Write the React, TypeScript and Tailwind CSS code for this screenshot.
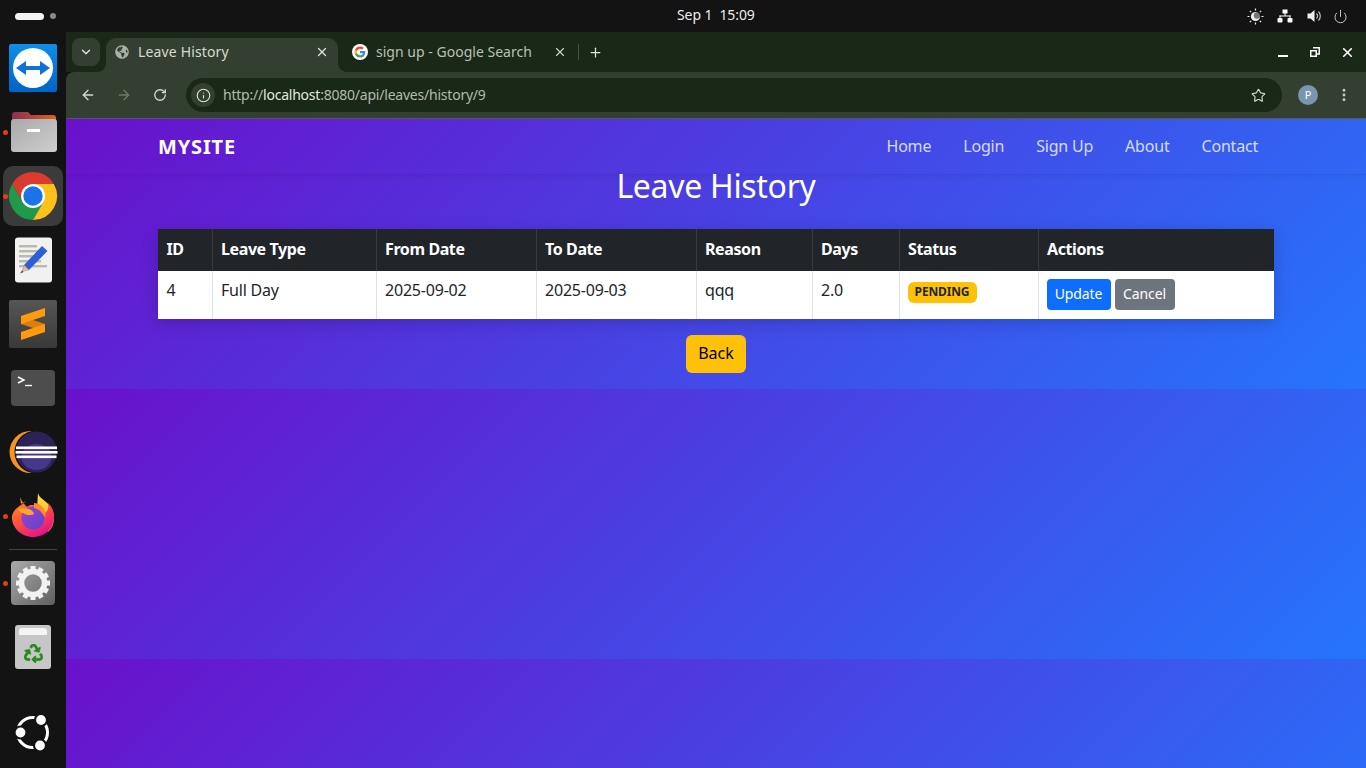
import { ArrowLeft, ArrowRight, RotateCw, Info, Star, X, Plus, ChevronDown, EllipsisVertical, Power } from "lucide-react";
import { FaGlobeAmericas, FaRecycle } from "react-icons/fa";
import type { ReactNode } from "react";

function Dot() {
  return <span className="absolute left-[3px] top-1/2 -mt-[2.5px] h-[5px] w-[5px] rounded-full bg-[#d9450f]" />;
}

function DockRow({ children, dot, className = "" }: { children: ReactNode; dot?: boolean; className?: string }) {
  return (
    <div className={`relative flex h-16 w-[66px] shrink-0 items-center justify-center ${className}`}>
      {children}
      {dot && <Dot />}
    </div>
  );
}

function Ic({ children }: { children: ReactNode }) {
  return (
    <svg width="64" height="64" viewBox="0 0 64 64" className="block">
      {children}
    </svg>
  );
}

const teeth = [0, 30, 60, 90, 120, 150, 180, 210, 240, 270, 300, 330];

function Dock() {
  return (
    <aside className="flex w-[66px] shrink-0 flex-col bg-[#131313] pt-1">
      <DockRow>
        <Ic>
          <defs>
            <linearGradient id="tv" x1="0" y1="0" x2="0" y2="1">
              <stop offset="0" stopColor="#0e8ee9" />
              <stop offset="1" stopColor="#0064c8" />
            </linearGradient>
          </defs>
          <rect x="8" y="8" width="48" height="48" rx="2" fill="url(#tv)" />
          <circle cx="32" cy="32" r="20" fill="#fff" />
          <path d="M15 32 L25 25 V30 H39 V25 L49 32 L39 39 V34 H25 V39 Z" fill="#0e72d8" />
        </Ic>
      </DockRow>
      <DockRow dot>
        <Ic>
          <defs>
            <linearGradient id="fo" x1="0" y1="0" x2="1" y2="0">
              <stop offset="0" stopColor="#8a2f52" />
              <stop offset="1" stopColor="#e2601f" />
            </linearGradient>
            <linearGradient id="ff" x1="0" y1="0" x2="1" y2="1">
              <stop offset="0" stopColor="#a9a9a9" />
              <stop offset="1" stopColor="#cfcfcf" />
            </linearGradient>
          </defs>
          <path d="M11 15 a3 3 0 0 1 3-3 h13 l3 3 h22 a3 3 0 0 1 3 3 v10 h-44z" fill="url(#fo)" />
          <rect x="10" y="19" width="46" height="33" rx="3" fill="url(#ff)" />
          <rect x="26" y="29" width="13" height="3" fill="#fff" />
        </Ic>
      </DockRow>
      <DockRow dot>
        <div className="flex h-[60px] w-[60px] items-center justify-center rounded-[10px] bg-[#3b3b3b]">
          <svg width="60" height="60" viewBox="2 2 60 60" className="block">
            <path d="M52.8 20 A24 24 0 0 0 11.2 20 L21.61 38 L32 32 L32 20 Z" fill="#db3a2f" />
            <path d="M11.2 20 A24 24 0 0 0 32 56 L42.39 38 L32 32 L21.61 38 Z" fill="#1f9a4b" />
            <path d="M32 56 A24 24 0 0 0 52.8 20 L32 20 L32 32 L42.39 38 Z" fill="#fcc21b" />
            <circle cx="32" cy="32" r="12" fill="#fff" />
            <circle cx="32" cy="32" r="9.7" fill="#1a73e8" />
          </svg>
        </div>
      </DockRow>
      <DockRow>
        <Ic>
          <rect x="14" y="9.5" width="37" height="45" rx="3" fill="#f1f1f1" />
          <g fill="#b9b9ad">
            <rect x="18" y="17" width="18" height="2.4" />
            <rect x="18" y="22" width="24" height="2.4" />
            <rect x="18" y="27" width="20" height="2.4" />
            <rect x="18" y="32" width="22" height="2.4" />
            <rect x="18" y="37" width="28" height="2.4" />
          </g>
          <path d="M41 18 L46.5 23 L28 42 L21 43.5 L23 37 Z" fill="#2f5fd8" />
          <path d="M23 37 L28 42 L21 44.5 Z" fill="#e8b98a" />
          <path d="M21 42.5 L22.5 44 L19 45.5 Z" fill="#444" />
        </Ic>
      </DockRow>
      <DockRow>
        <Ic>
          <defs>
            <linearGradient id="sb" x1="0" y1="0" x2="0" y2="1">
              <stop offset="0" stopColor="#565656" />
              <stop offset="1" stopColor="#393939" />
            </linearGradient>
          </defs>
          <rect x="8" y="8" width="48" height="48" rx="2" fill="url(#sb)" />
          <path d="M20 24 L44 32 V40 L20 32Z" fill="#d97f0d" />
          <path d="M20 24 L44 16 V24 L20 32Z" fill="#ff9a0f" />
          <path d="M20 40 L44 32 V40 L20 48Z" fill="#ff9a0f" />
        </Ic>
      </DockRow>
      <DockRow>
        <Ic>
          <rect x="10" y="14" width="44" height="36" rx="4" fill="#4d4d4d" />
          <path d="M17 21 L23 24 L17 27" fill="none" stroke="#fff" strokeWidth="1.4" />
          <path d="M24 29.5 H31" stroke="#fff" strokeWidth="1.4" />
        </Ic>
      </DockRow>
      <DockRow>
        <Ic>
          <circle cx="29.5" cy="32" r="21" fill="#f7941e" />
          <circle cx="35" cy="32" r="21.5" fill="#131313" />
          <circle cx="35.5" cy="32" r="20.5" fill="#2c2255" />
          <ellipse cx="35.5" cy="37" rx="15" ry="13" fill="#473788" />
          <rect x="15" y="26.5" width="41" height="2.6" fill="#fff" />
          <rect x="14.5" y="31" width="42" height="2.6" fill="#fff" />
          <rect x="15.5" y="35.5" width="40" height="2.6" fill="#fff" />
        </Ic>
      </DockRow>
      <DockRow dot>
        <Ic>
          <defs>
            <linearGradient id="fx" x1="0" y1="0" x2="0.6" y2="1">
              <stop offset="0" stopColor="#ff9a1f" />
              <stop offset="0.55" stopColor="#ff4f3e" />
              <stop offset="1" stopColor="#e6148a" />
            </linearGradient>
            <linearGradient id="fy" x1="0" y1="0" x2="0" y2="1">
              <stop offset="0" stopColor="#ffe14a" />
              <stop offset="1" stopColor="#ff9a1f" />
            </linearGradient>
            <linearGradient id="fp" x1="0" y1="0" x2="1" y2="1">
              <stop offset="0" stopColor="#a23fd0" />
              <stop offset="1" stopColor="#5a46c8" />
            </linearGradient>
          </defs>
          <path d="M37 9 C38 15 47 17 51 25 C54 32 54 42 47 48 L36 25 Z" fill="url(#fy)" />
          <path d="M19 13 L20 20 L25 17 C22 21 13 23 11 32 C10 43 20 53 32 53 C44 53 53 44 53 33 C53 27 51 23 47 19 C48 25 46 28 44 29 C40 21 30 19 26 23 C24 21 21 18 19 13Z" fill="url(#fx)" />
          <circle cx="32" cy="34" r="11.5" fill="url(#fp)" />
          <path d="M17 25 C24 23 32 25 33 30 C30 32 24 31 22 29 C20 29 18 27 17 25Z" fill="#ffa726" />
          <path d="M33 19 C40 19 46 26 44 34 C42 29 38 25 33 24Z" fill="#ff8a2a" />
        </Ic>
      </DockRow>
      <div className="mx-[9px] mt-px h-px w-12 shrink-0 bg-[#444]" />
      <DockRow dot className="mt-px">
        <Ic>
          <defs>
            <linearGradient id="gr" x1="0" y1="0" x2="1" y2="1">
              <stop offset="0" stopColor="#ababab" />
              <stop offset="1" stopColor="#5f5f5f" />
            </linearGradient>
          </defs>
          <rect x="10" y="10" width="44" height="44" rx="4" fill="url(#gr)" />
          {teeth.map((t) => (
            <rect key={t} x="29.5" y="15" width="5" height="6" fill="#f2f2f2" transform={`rotate(${t} 32 32)`} />
          ))}
          <circle cx="32" cy="32" r="11.5" fill="none" stroke="#f2f2f2" strokeWidth="5.5" />
        </Ic>
      </DockRow>
      <DockRow>
        <div className="flex h-[44px] w-[36px] flex-col items-center rounded-[3px] bg-[#c6c6c6] pt-[3px]">
          <div className="h-[7px] w-[28px] rounded-t-[3px] bg-[#f4f4f4]" />
          <FaRecycle className="mt-[9px] stroke-[#2a8a1e] stroke-[14] text-[#2a8a1e]" size={19} />
        </div>
      </DockRow>
      <DockRow className="mt-[22px]">
        <Ic>
          <circle cx="31.5" cy="31.5" r="15" fill="none" stroke="#fff" strokeWidth="3" />
          <g fill="#fff" stroke="#131313" strokeWidth="2.2">
            <circle cx="40" cy="19" r="6" />
            <circle cx="19.5" cy="31.5" r="6" />
            <circle cx="39" cy="44.5" r="6" />
          </g>
        </Ic>
      </DockRow>
    </aside>
  );
}

function TopBar() {
  return (
    <header className="flex h-8 shrink-0 items-center bg-[#131313] text-[14px] text-[#ececec]">
      <div className="ml-[15px] h-[7px] w-[29px] rounded-full bg-[#f2f2f2]" />
      <div className="ml-[6px] h-[6px] w-[6px] rounded-full bg-[#8a8a8a]" />
      <div className="mb-[3px] ml-[621px] whitespace-pre tracking-[-0.1px]">Sep 1  15:09</div>
      <div className="ml-auto mr-[18px] flex items-center gap-[12px]">
        <svg width="17" height="17" viewBox="0 0 17 17" className="block">
          <circle cx="8.5" cy="8.5" r="4.6" fill="#eee" />
          <circle cx="10" cy="7.5" r="3.2" fill="#131313" opacity="0.55" />
          <g stroke="#eee" strokeWidth="1.2">
            <path d="M8.5 0.5V2.5M8.5 14.5V16.5M0.5 8.5H2.5M14.5 8.5H16.5M2.8 2.8L4.2 4.2M12.8 12.8L14.2 14.2M2.8 14.2L4.2 12.8M12.8 4.2L14.2 2.8" />
          </g>
        </svg>
        <svg width="16" height="14" viewBox="0 0 16 14" className="ml-[1px] block">
          <g fill="#fff">
            <rect x="5.5" y="0.5" width="5" height="4" />
            <rect x="0.5" y="9" width="5" height="4.5" rx="1" />
            <rect x="10.5" y="9" width="5" height="4.5" rx="1" />
            <rect x="7.5" y="4" width="1" height="3" />
            <rect x="2.5" y="6.5" width="11" height="1" />
            <rect x="2.5" y="6.5" width="1" height="3" />
            <rect x="12.5" y="6.5" width="1" height="3" />
          </g>
        </svg>
        <svg width="15" height="14" viewBox="0 0 15 14" className="ml-[2px] block">
          <path d="M0.5 4.5H3.5L7.5 1V13L3.5 9.5H0.5Z" fill="#eee" />
          <path d="M9.5 4.5a3.5 3.5 0 0 1 0 5M11.5 2.5a6.5 6.5 0 0 1 0 9" fill="none" stroke="#bbb" strokeWidth="1.2" />
        </svg>
        <Power size={15} strokeWidth={1.3} className="-ml-[1px] text-[#eee]" />
      </div>
    </header>
  );
}

function GoogleG() {
  return (
    <span className="flex h-4 w-4 shrink-0 items-center justify-center rounded-full bg-white">
      <svg width="12" height="12" viewBox="0 0 24 24" className="block">
        <path fill="#4285F4" d="M22.56 12.25c0-.78-.07-1.53-.2-2.25H12v4.26h5.92c-.26 1.37-1.04 2.53-2.21 3.31v2.77h3.57c2.08-1.92 3.28-4.74 3.28-8.09z" />
        <path fill="#34A853" d="M12 23c2.97 0 5.46-.98 7.28-2.66l-3.57-2.77c-.98.66-2.23 1.06-3.71 1.06-2.86 0-5.29-1.93-6.16-4.53H2.18v2.84C3.99 20.53 7.7 23 12 23z" />
        <path fill="#FBBC05" d="M5.84 14.09c-.22-.66-.35-1.36-.35-2.09s.13-1.43.35-2.09V7.07H2.18C1.43 8.55 1 10.22 1 12s.43 3.45 1.18 4.93l2.85-2.22.81-.62z" />
        <path fill="#EA4335" d="M12 5.38c1.62 0 3.06.56 4.21 1.64l3.15-3.15C17.45 2.09 14.97 1 12 1 7.7 1 3.99 3.47 2.18 7.07l3.66 2.84c.87-2.6 3.3-4.53 6.16-4.53z" />
      </svg>
    </span>
  );
}

function TabStrip() {
  return (
    <div className="flex h-10 shrink-0 items-start bg-[#1a2817] pt-[6px] text-[14px]">
      <button className="ml-[6px] flex h-[28px] w-[28px] items-center justify-center rounded-[8px] bg-[#333f30] text-[#dfe5da]">
        <ChevronDown size={14} strokeWidth={2.4} />
      </button>
      <div className="relative ml-[6px] flex h-[34px] w-[232px] items-center rounded-t-[10px] bg-[#333f30] pb-[6px] pl-[9px] text-[#d5dccf]">
        <span className="absolute bottom-0 -left-2 h-2 w-2 bg-[radial-gradient(circle_at_0_0,transparent_7.5px,#333f30_8px)]" />
        <span className="absolute bottom-0 -right-2 h-2 w-2 bg-[radial-gradient(circle_at_100%_0,transparent_7.5px,#333f30_8px)]" />
        <FaGlobeAmericas size={14} className="text-[#a9b1a4]" />
        <span className="mb-[2px] ml-[9px] tracking-[0.15px]">Leave History</span>
        <X size={14} strokeWidth={2.2} className="absolute right-[9px] text-[#dfe5da]" />
      </div>
      <div className="ml-[14px] flex h-[28px] items-center text-[#b9c1b3]">
        <GoogleG />
        <span className="mb-[2px] ml-2 w-[165px] tracking-[0.02px]">sign up - Google Search</span>
        <X size={14} strokeWidth={2} className="ml-[12px] text-[#c5ccbf]" />
        <span className="ml-[11px] h-4 w-px bg-[#47533f]" />
        <Plus size={15} strokeWidth={2} className="ml-[9px] text-[#dfe5da]" />
      </div>
      <div className="ml-auto mr-[11px] flex h-[28px] items-center text-white">
        <svg width="12" height="12" viewBox="0 0 12 12" className="mr-[21px] mt-[2px] block">
          <rect x="1" y="8" width="10" height="2" fill="#fff" />
        </svg>
        <svg width="10" height="10" viewBox="0 0 10 10" className="mr-[20px] block">
          <path d="M3 0.75H9.25V7H7" fill="none" stroke="#fff" strokeWidth="1.5" />
          <path d="M0 3H7V10H0Z M1.5 4.5V8.5H5.5V4.5Z" fill="#fff" fillRule="evenodd" />
        </svg>
        <X size={15} strokeWidth={2.6} />
      </div>
    </div>
  );
}

function Toolbar() {
  return (
    <div className="box-content flex h-[46px] shrink-0 items-center rounded-tl-[8px] border-b border-[#555b52] bg-[#333f30]">
      <ArrowLeft size={16} strokeWidth={2} className="ml-[14px] text-[#d5dccf]" />
      <ArrowRight size={16} strokeWidth={2} className="ml-[20px] text-[#6f7a6a]" />
      <RotateCw size={14} strokeWidth={2.2} className="ml-[21px] text-[#d5dccf]" />
      <div className="ml-[19px] flex h-[34px] w-[1096px] items-center rounded-full bg-[#1a2817] pl-[5px] text-[14px]">
        <span className="flex h-6 w-6 items-center justify-center rounded-full bg-[#333f30]">
          <Info size={15} strokeWidth={1.8} className="text-[#dfe5da]" />
        </span>
        <span className="mb-px ml-2 tracking-[-0.22px] text-[#b3bbac]">
          http://<span className="text-[#e3e9dd]">localhost</span>:8080/api/leaves/history/9
        </span>
        <Star size={15} strokeWidth={1.8} className="ml-auto mr-4 text-[#d5dccf]" />
      </div>
      <span className="ml-[16px] flex h-5 w-5 items-center justify-center rounded-full bg-[#7a96ac] text-[11px] text-white">P</span>
      <EllipsisVertical size={16} strokeWidth={2.4} className="ml-[18px] text-[#c5ccbf]" />
    </div>
  );
}

const headers: [string, number][] = [
  ["ID", 54],
  ["Leave Type", 164],
  ["From Date", 160],
  ["To Date", 160],
  ["Reason", 116],
  ["Days", 87],
  ["Status", 139],
  ["Actions", 236],
];

const cell = "border-r border-[#dee2e6] pl-[8.5px] pr-2 pt-[7px] pb-2 align-top text-[16px] leading-[24px] tracking-[-0.2px] last:border-r-0";

function Page() {
  return (
    <main className="min-h-0 flex-1 bg-[linear-gradient(135deg,#6a11cb,#2575fc)] bg-[length:100%_270px] [font-family:'Noto_Sans',sans-serif]">
      <nav className="flex h-[56px] items-center justify-between border-b border-[#00000012] pl-[92px] pr-[108px] shadow-[0_2px_4px_rgba(0,0,0,0.05)]">
        <span className="text-[20px] font-bold leading-none tracking-[0.85px] text-white">MYSITE</span>
        <div className="mb-[2px] flex gap-[32px] text-[16px] tracking-[-0.2px] text-[#ffffffcc]">
          <span>Home</span>
          <span>Login</span>
          <span>Sign Up</span>
          <span>About</span>
          <span>Contact</span>
        </div>
      </nav>
      <h1 className="-mt-[8px] text-center text-[32px] leading-[38px] tracking-[-0.3px] text-white">Leave History</h1>
      <div className="mx-[92px] mt-[24px] w-[1116px]">
        <table className="w-full table-fixed border-collapse bg-white shadow-[0_4px_16px_rgba(0,0,0,0.18)]">
          <colgroup>
            {headers.map(([h, w]) => (
              <col key={h} style={{ width: w }} />
            ))}
          </colgroup>
          <thead>
            <tr className="h-[42px] bg-[#212529] text-white">
              {headers.map(([h]) => (
                <th key={h} className="border-r border-[#373b3e] pb-[2px] pl-[8.5px] pr-2 text-left text-[16px] font-bold leading-[24px] tracking-[-0.4px] last:border-r-0">
                  {h}
                </th>
              ))}
            </tr>
          </thead>
          <tbody>
            <tr className="h-[48px] text-[#212529]">
              <td className={cell}>4</td>
              <td className={cell}>Full Day</td>
              <td className={cell}>2025-09-02</td>
              <td className={cell}>2025-09-03</td>
              <td className={cell}>qqq</td>
              <td className={cell}>2.0</td>
              <td className={`${cell} !pl-2 !pt-[11px]`}>
                <span className="flex h-[21px] w-[69px] items-center justify-center rounded-[6px] bg-[#ffc107] pb-px text-[12px] font-bold leading-none tracking-[-0.15px] text-[#212529]">
                  PENDING
                </span>
              </td>
              <td className={`${cell} !pl-2 !pt-2`}>
                <div className="flex gap-[4px]">
                  <button className="h-[31px] w-[64px] rounded-[4px] bg-[#0d6efd] pb-[2px] text-[14px] tracking-[-0.1px] text-white">Update</button>
                  <button className="h-[31px] w-[60px] rounded-[4px] bg-[#6c757d] pb-[2px] text-[14px] tracking-[-0.1px] text-white">Cancel</button>
                </div>
              </td>
            </tr>
          </tbody>
        </table>
        <div className="mt-[16px] flex justify-center">
          <button className="h-[38px] w-[60px] rounded-[6px] bg-[#ffc107] pb-[2px] text-[16px] text-black">Back</button>
        </div>
      </div>
    </main>
  );
}

export default function App() {
  return (
    <div className="flex h-[768px] w-[1366px] flex-col overflow-hidden bg-[#131313] [font-family:'Noto_Sans',sans-serif]">
      <TopBar />
      <div className="flex min-h-0 flex-1">
        <Dock />
        <div className="flex min-w-0 flex-1 flex-col">
          <TabStrip />
          <Toolbar />
          <Page />
        </div>
      </div>
    </div>
  );
}
